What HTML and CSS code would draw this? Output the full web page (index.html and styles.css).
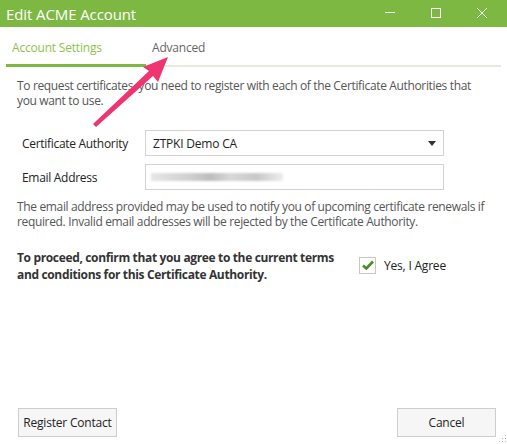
FILE: index.html
```html
<!DOCTYPE html>
<html>
<head>
<meta charset="utf-8">
<link rel="stylesheet" href="styles.css">
</head>
<body>
<div class="window">
  <div class="titlebar">
    <div class="title">Edit ACME Account</div>
    <div class="controls">
      <svg class="ctl" width="46" height="27" viewBox="0 0 46 27"><line x1="18" y1="12.5" x2="28" y2="12.5" stroke="#fff" stroke-width="1"/></svg>
      <svg class="ctl" width="46" height="27" viewBox="0 0 46 27"><rect x="18.5" y="8.5" width="9" height="9" fill="none" stroke="#fff" stroke-width="1"/></svg>
      <svg class="ctl" width="46" height="27" viewBox="0 0 46 27"><path d="M18 8 L28 18 M28 8 L18 18" stroke="#fff" stroke-width="1"/></svg>
    </div>
  </div>
  <div class="tabs">
    <div class="tab active">Account Settings</div>
    <div class="tab">Advanced</div>
  </div>
  <div class="content">
    <p class="intro">To request certificates, you need to register with each of the Certificate Authorities that you want to use.</p>
    <div class="form">
      <div class="row">
        <label class="label">Certificate Authority</label>
        <div class="field select"><span>ZTPKI Demo CA</span><svg width="8" height="5" viewBox="0 0 8 5"><path d="M0 0 H8 L4 5 Z" fill="#333"/></svg></div>
      </div>
      <div class="row">
        <label class="label">Email Address</label>
        <div class="field"><span class="blur"></span></div>
      </div>
    </div>
    <p class="help">The email address provided may be used to notify you of upcoming certificate renewals if required. Invalid email addresses will be rejected by the Certificate Authority.</p>
    <div class="agree">
      <p class="terms">To proceed, confirm that you agree to the current terms and conditions for this Certificate Authority.</p>
      <div class="check">
        <span class="box"><svg width="12" height="10" viewBox="0 0 12 10"><path d="M1 5.5 L4.3 8.5 L11 1.5" fill="none" stroke="#4b8b1f" stroke-width="2.6"/></svg></span>
        <span>Yes, I Agree</span>
      </div>
    </div>
  </div>
  <div class="footer">
    <button class="btn reg">Register Contact</button>
    <button class="btn cancel">Cancel</button>
  </div>
  <svg class="grip" width="8" height="8" viewBox="0 0 8 8"><g fill="#b8b8b8"><rect x="6" y="0" width="1" height="1"/><rect x="3" y="3" width="1" height="1"/><rect x="6" y="3" width="1" height="1"/><rect x="0" y="6" width="1" height="1"/><rect x="3" y="6" width="1" height="1"/><rect x="6" y="6" width="1" height="1"/></g></svg>
  <svg class="arrow" width="507" height="444" viewBox="0 0 507 444">
    <path d="M93 124 L96 127 L153 76 L158 82 L168 57 L143 67 L149 71 Z" fill="#ef3470"/>
  </svg>
</div>
</body>
</html>
```
FILE: styles.css
```css
* { box-sizing: border-box; }
html, body { margin: 0; padding: 0; background: #fff; }
body { font-family: "Open Sans", "Noto Sans", sans-serif; font-size: 12px; color: #555; }
.window { position: relative; width: 507px; height: 444px; display: flex; flex-direction: column; overflow: hidden; }
.titlebar { height: 27px; background: #7db843; display: flex; align-items: center; justify-content: space-between; }
.title { color: #fff; font-size: 15px; padding-left: 6px; letter-spacing: -0.1px; }
.controls { display: flex; align-items: flex-start; height: 27px; margin-right: 2px; }
.ctl { display: block; }
.tabs { display: flex; height: 40px; margin: 0 6px; border-bottom: 2px solid #e6ecdc; align-items: stretch; }
.tab { padding: 12px 0 0 6px; font-size: 12px; color: #666; width: 140px; letter-spacing: -0.2px; }
.tab.active { color: #8bc34a; border-bottom: 3px solid #7db843; margin-bottom: -2px; }
.tab + .tab { padding-left: 6px; }
.content { padding: 0 17px; }
.intro { margin: 11px 0 0; line-height: 15px; width: 470px; letter-spacing: -0.35px; }
.form { margin-top: 22px; padding-left: 5px; display: flex; flex-direction: column; gap: 8px; }
.row { display: flex; align-items: center; }
.label { width: 123px; color: #222; letter-spacing: -0.3px; }
.field { width: 299px; height: 26px; border: 1.5px solid #d2d2d2; display: flex; align-items: center; justify-content: space-between; padding: 0 7px; color: #222; letter-spacing: -0.2px; }
.blur { width: 132px; height: 8px; background: linear-gradient(90deg, #e6e6e6, #cfcfcf 30%, #bdbdbd 45%, #d8d8d8 60%, #c8c8c8 80%, #eee); filter: blur(1px); margin-left: -2px; }
.help { margin: 9px 0 0; line-height: 15px; width: 480px; letter-spacing: -0.35px; }
.agree { display: flex; align-items: center; margin-top: 20px; }
.terms { margin: 0; width: 342px; padding-right: 16px; font-weight: bold; color: #333; line-height: 17px; letter-spacing: -0.35px; }
.check { display: flex; align-items: center; gap: 8px; color: #222; letter-spacing: -0.2px; margin-top: -2px; }
.box { width: 17px; height: 17px; border: 1.5px solid #c8c8c8; display: flex; align-items: center; justify-content: center; }
.footer { margin-top: auto; display: flex; justify-content: space-between; padding: 0 11px 7px 18px; }
.btn { height: 29px; background: #f6f6f6; border: 1.5px solid #cdcdcd; font-family: inherit; font-size: 12px; color: #222; padding: 0; letter-spacing: -0.2px; }
.reg { width: 99px; }
.cancel { width: 99px; }
.grip { position: absolute; right: 0; bottom: 1px; }
.arrow { position: absolute; left: 0; top: 0; pointer-events: none; }
```
